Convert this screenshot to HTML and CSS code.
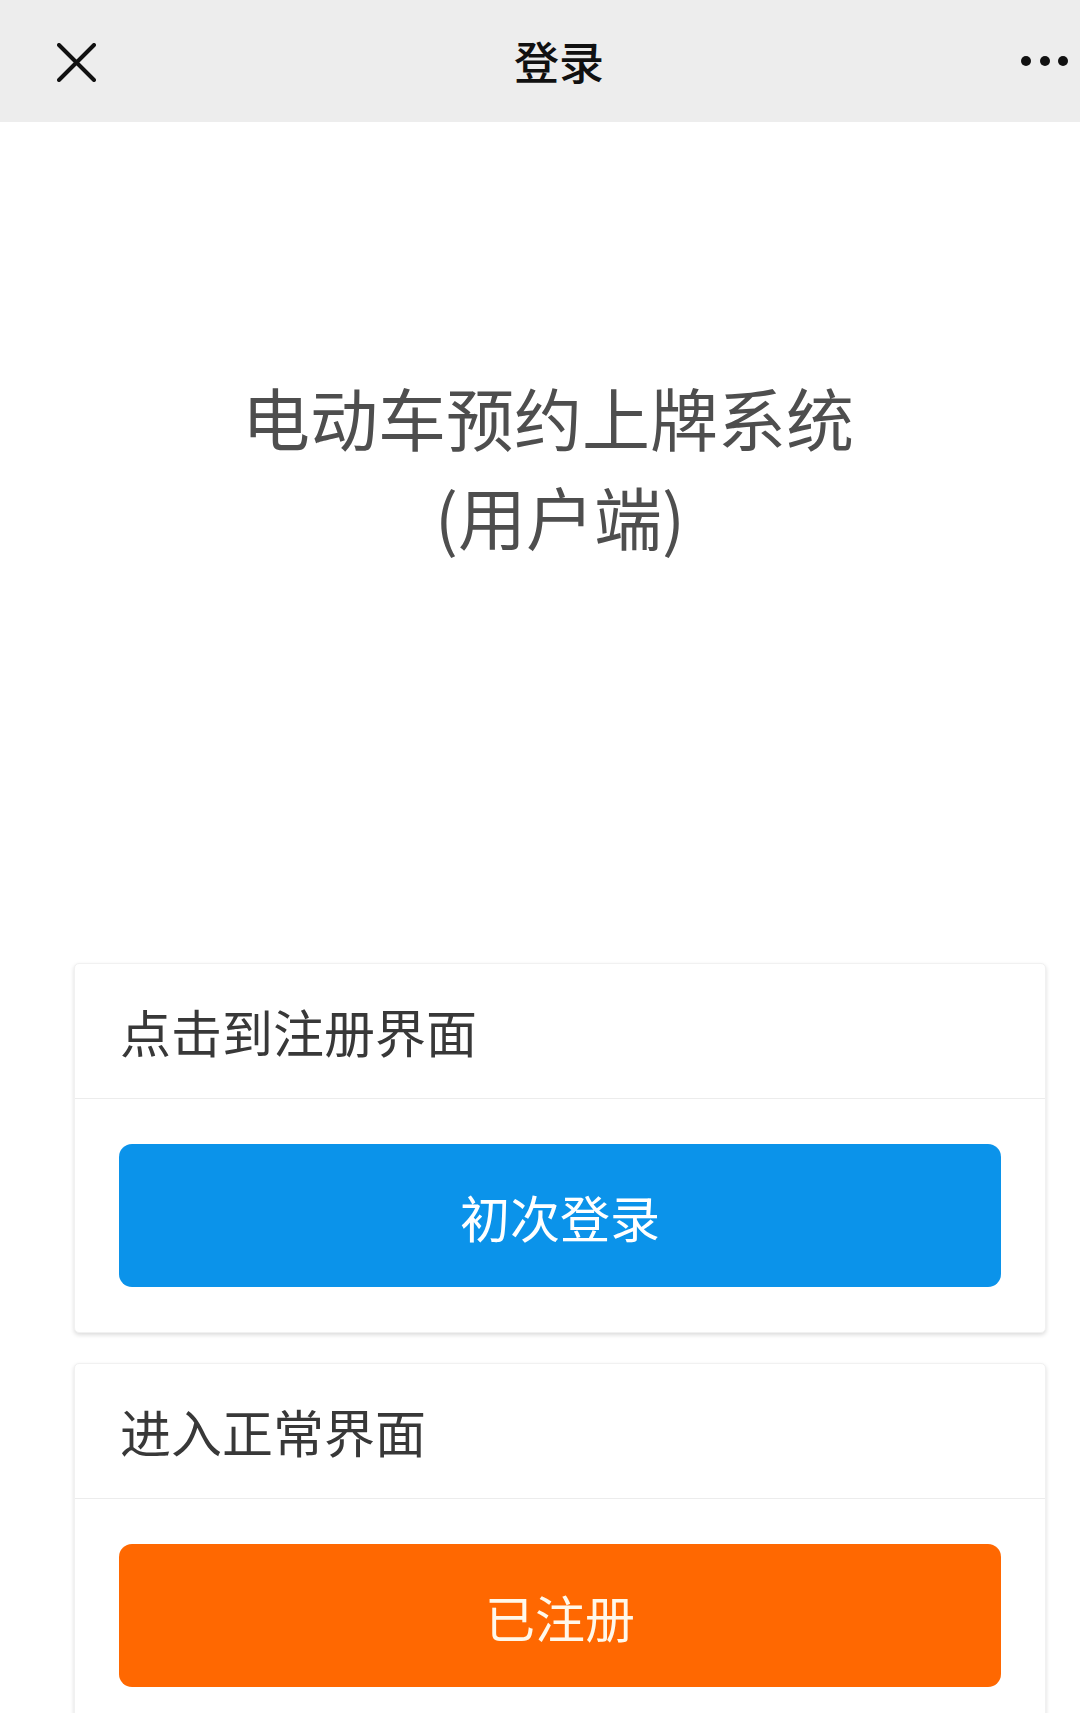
FILE: index.html
```html
<!DOCTYPE html>
<html lang="zh-CN">
<head>
<meta charset="utf-8">
<title>登录</title>
<link rel="stylesheet" href="styles.css">
</head>
<body>
<header class="topbar">
  <div class="topbar-left">
    <svg class="icon-close" viewBox="0 0 39 39" width="39" height="39" aria-hidden="true">
      <path d="M2 2 L37 37 M37 2 L2 37" stroke="#111" stroke-width="4" stroke-linecap="round" fill="none"/>
    </svg>
  </div>
  <div class="topbar-title">登录</div>
  <div class="topbar-right">
    <span class="dot"></span><span class="dot"></span><span class="dot"></span>
  </div>
</header>
<main class="page">
  <h1 class="app-title"><span class="line1">电动车预约上牌系统</span><br>(用户端)</h1>
  <section class="card">
    <div class="card-head">点击到注册界面</div>
    <div class="card-body">
      <button class="btn btn-blue">初次登录</button>
    </div>
  </section>
  <section class="card">
    <div class="card-head">进入正常界面</div>
    <div class="card-body">
      <button class="btn btn-orange">已注册</button>
    </div>
  </section>
</main>
</body>
</html>
```
FILE: styles.css
```css
html, body {
  margin: 0;
  padding: 0;
  background: #ffffff;
  font-family: "Noto Sans CJK SC", "Noto Sans", sans-serif;
}

.topbar {
  height: 122px;
  background: #ededed;
  display: grid;
  grid-template-columns: 1fr auto 1fr;
  align-items: center;
  padding: 0 12px 0 50px;
  box-sizing: border-box;
}

.topbar-left {
  display: flex;
  align-items: center;
  padding-left: 7px;
  padding-top: 2px;
}

.icon-close {
  display: block;
}

.topbar-title {
  font-size: 45px;
  font-weight: 500;
  color: #111111;
  line-height: 1;
  padding-bottom: 2px;
}

.topbar-right {
  display: flex;
  justify-content: flex-end;
  align-items: center;
  gap: 8.5px;
}

.dot {
  width: 10px;
  height: 10px;
  border-radius: 50%;
  background: #111111;
}

.page {
  padding: 0 34px 0 74px;
}

.app-title {
  margin: 245px 0 398px;
  font-size: 68px;
  line-height: 99px;
  font-weight: 400;
  color: #4e4e4e;
  text-align: center;
}

.line1 {
  margin-right: 24px;
}

.card {
  background: #ffffff;
  border-radius: 5px;
  border: 1px solid #f1f1f1;
  box-shadow: 0 2px 4px rgba(0, 0, 0, 0.14);
  margin-bottom: 30px;
  overflow: hidden;
}

.card-head {
  height: 135px;
  display: flex;
  align-items: center;
  padding-left: 45px;
  font-size: 51px;
  color: #383838;
  border-bottom: 1px solid #ececec;
  box-sizing: border-box;
}

.card-body {
  padding: 45px 44px 45px 44px;
}

.btn {
  display: block;
  width: 100%;
  height: 143px;
  border: none;
  border-radius: 13px;
  font-family: "Noto Sans CJK SC", "Noto Sans", sans-serif;
  font-size: 50px;
  font-weight: 400;
  color: #ffffff;
  padding: 0;
}

.btn-blue {
  background: #0b93ea;
}

.btn-orange {
  background: #ff6801;
  color: #fff8ea;
}
```
